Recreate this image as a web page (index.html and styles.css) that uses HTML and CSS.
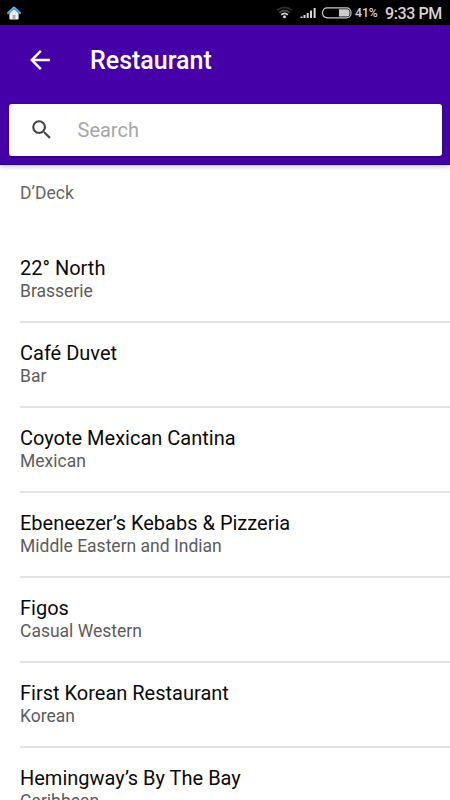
FILE: index.html
```html
<!DOCTYPE html>
<html lang="en">
<head>
<meta charset="utf-8">
<title>Restaurant</title>
<link rel="stylesheet" href="styles.css">
</head>
<body>
<div class="status">
  <svg class="home" width="14" height="14" viewBox="0 0 14 14"><path d="M2.4 7 7 2.7 11.6 7v5.6q0 .9-.9.9H3.3q-.9 0-.9-.9z" fill="#f2f2f2"/><path d="M5.5 8.8h3v4h-3z" fill="#aaa"/><path d="M1 7.2 7 1.7l6 5.5" fill="none" stroke="#3f95df" stroke-width="2.4" stroke-linecap="round" stroke-linejoin="round"/><path d="M1.3 6.2 7 1.1l5.7 5.1" fill="none" stroke="#8bcaff" stroke-width=".7"/></svg>
  <svg class="wifi" width="17" height="13" viewBox="0 0 17 13"><g fill="none"><path d="M1 4.2q7.5-5.6 15 0" stroke="#2c2c2c" stroke-width="1.7"/><path d="M3.3 6.7q5.2-4.4 10.4 0" stroke="#484848" stroke-width="1.7"/><path d="M5.2 8.9q3.3-3 6.6 0" stroke="#ddd" stroke-width="1.7"/></g><circle cx="8.5" cy="10.8" r="1.5" fill="#ddd"/></svg>
  <svg class="signal" width="17" height="12" viewBox="0 0 17 12"><path d="M.5 9.5h2V11h-2zM3.5 8h2v3h-2zM6.7 6h2v5h-2zM10 3.5h2V11h-2zM13.6 1h2v10h-2z" fill="#d8d8d8"/></svg>
  <svg class="battery" width="30" height="12" viewBox="0 0 30 12"><rect x=".6" y=".8" width="28.4" height="10" rx="4.5" fill="none" stroke="#ccc" stroke-width="1.2"/><path d="M17 2.2h8q2.5 0 2.5 2.5v2.2q0 2.5-2.5 2.5h-8z" fill="#ccc"/></svg>
  <span class="percent">41%</span>
  <span class="clock">9:33 PM</span>
</div>
<header class="header">
  <div class="toolbar">
    <svg class="back" width="30" height="30" viewBox="0 0 24 24"><path d="M20 11H7.83l5.59-5.59L12 4l-8 8 8 8 1.41-1.41L7.83 13H20v-2z" fill="#fff"/></svg>
    <h1 class="title">Restaurant</h1>
  </div>
  <div class="search">
    <svg class="magnifier" width="25.5" height="25.5" viewBox="0 0 24 24"><path d="M15.5 14h-.79l-.28-.27A6.47 6.47 0 0 0 16 9.5 6.5 6.5 0 1 0 9.5 16c1.61 0 3.09-.59 4.23-1.57l.27.28v.79l5 4.99L20.49 19l-4.99-5zm-6 0a4.5 4.5 0 1 1 0-9 4.5 4.5 0 0 1 0 9z" fill="#444"/></svg>
    <span class="placeholder">Search</span>
  </div>
</header>
<main class="list">
  <p class="location">D’Deck</p>
  <div class="row"><div class="name">22° North</div><div class="type">Brasserie</div></div>
  <div class="row"><div class="name">Café Duvet</div><div class="type">Bar</div></div>
  <div class="row"><div class="name">Coyote Mexican Cantina</div><div class="type">Mexican</div></div>
  <div class="row"><div class="name">Ebeneezer’s Kebabs &amp; Pizzeria</div><div class="type">Middle Eastern and Indian</div></div>
  <div class="row"><div class="name">Figos</div><div class="type">Casual Western</div></div>
  <div class="row"><div class="name">First Korean Restaurant</div><div class="type">Korean</div></div>
  <div class="row"><div class="name">Hemingway’s By The Bay</div><div class="type">Caribbean</div></div>
</main>
</body>
</html>
```
FILE: styles.css
```css
* { box-sizing: border-box; }
body {
  margin: 0;
  height: 800px;
  overflow: hidden;
  display: flex;
  flex-direction: column;
  background: #fff;
  font-family: Roboto, sans-serif;
}
.status {
  flex: none;
  height: 25px;
  background: #000;
  color: #d4d4d4;
  display: flex;
  align-items: center;
  padding: 0 8px 0 7px;
}
.home { margin-right: auto; margin-top: 1px; }
.wifi { margin-right: 7px; }
.signal { margin-right: 5px; }
.battery { margin-right: 3px; }
.percent { width: 30px; font-size: 12.2px; font-weight: 500; line-height: 25px; padding-top: 1px; }
.clock { width: 57px; font-size: 16px; letter-spacing: -.4px; font-weight: 500; line-height: 25px; padding-top: 1px; white-space: nowrap; }
.header {
  flex: none;
  height: 140px;
  background: #4500a8;
  border-bottom: 1px solid #24008a;
  box-shadow: 0 1px 5px rgba(0, 0, 0, .3);
}
.toolbar { height: 70px; display: flex; align-items: center; padding-left: 25px; }
.title { margin: 2px 0 0 35px; color: #fff; font-size: 25px; font-weight: 500; line-height: 30px; }
.search {
  height: 52.5px;
  margin: 8.5px 8.5px 0;
  border-radius: 3px;
  background: #fff;
  box-shadow: 0 1px 3px rgba(0, 0, 0, .45);
  display: flex;
  align-items: center;
  padding-left: 20px;
}
.placeholder { margin-left: 23.5px; color: #a6a6a6; font-size: 20px; line-height: 24px; }
.list { flex: none; }
.location { margin: 17px 0 34px 20px; color: #666; font-size: 17.5px; line-height: 22px; }
.row {
  height: 85px;
  margin-left: 20px;
  padding-top: 17px;
  border-bottom: 2px solid #e3e3e3;
}
.name { color: #0a0a0a; font-size: 20px; line-height: 26px; }
.type { color: #5c5c5c; font-size: 17.5px; line-height: 21px; }
```
